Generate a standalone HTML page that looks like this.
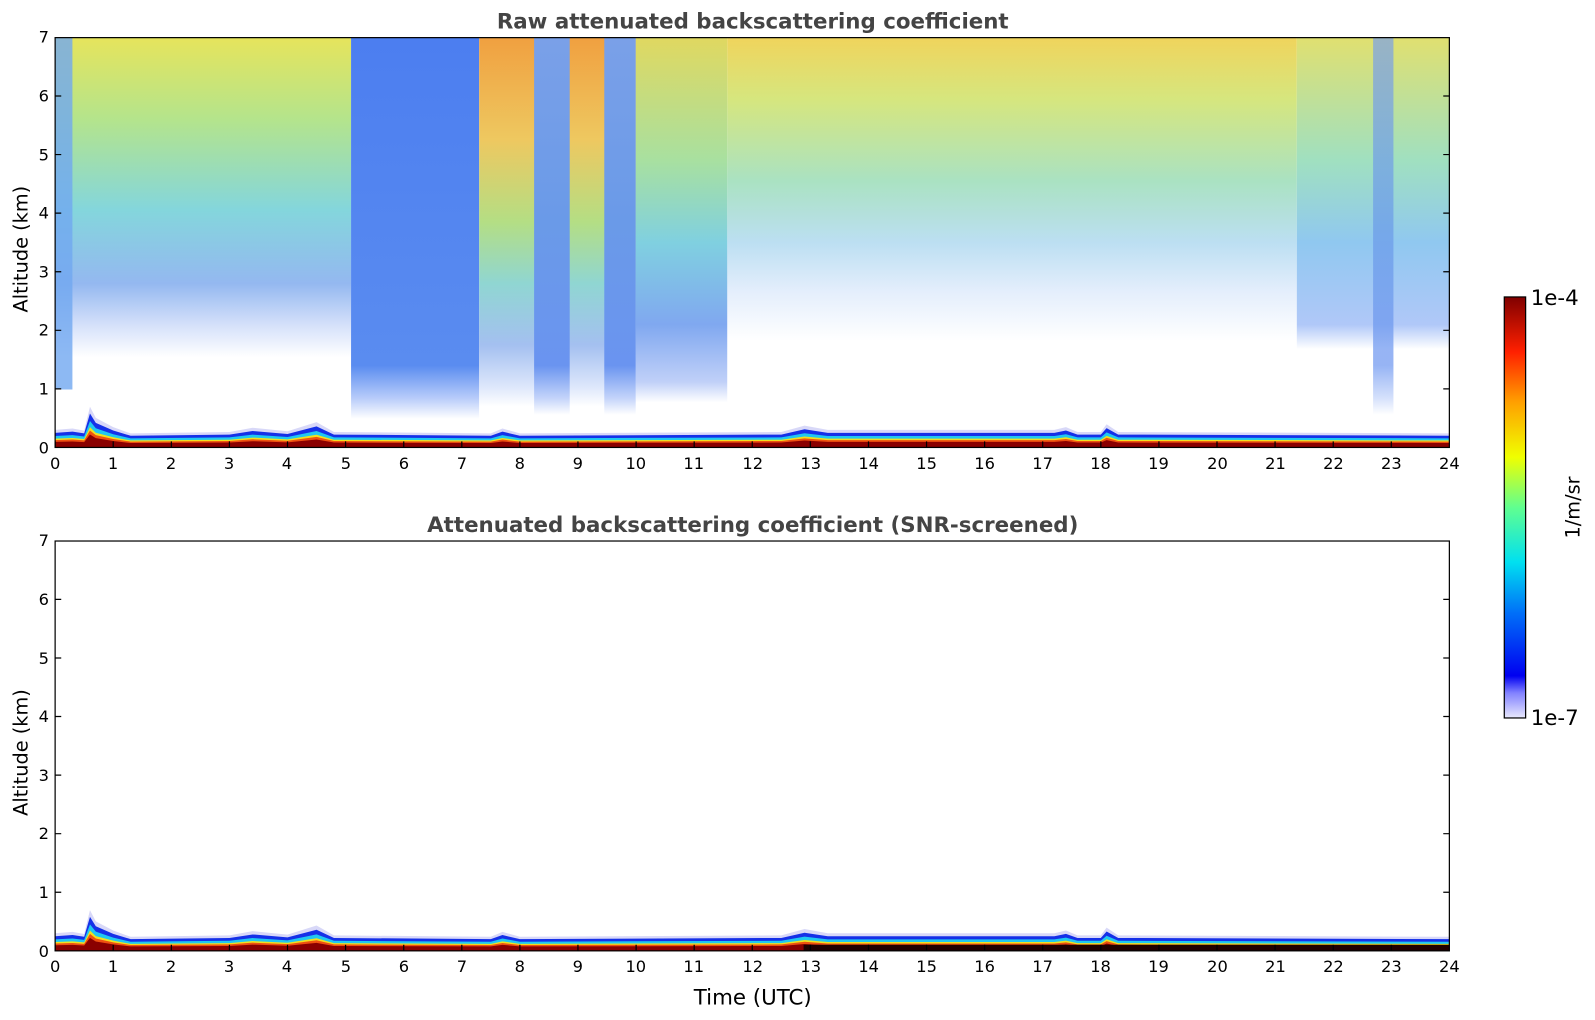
<!DOCTYPE html>
<html><head><meta charset="utf-8"><style>
html,body{margin:0;padding:0;background:#fff;}
svg{display:block;}
text{font-family:"DejaVu Sans","Liberation Sans",sans-serif;}
</style></head><body>
<svg width="1595" height="1020" viewBox="0 0 1568 1003" xmlns="http://www.w3.org/2000/svg">
<defs>
<linearGradient id="gA" x1="0" y1="0" x2="0" y2="1">
<stop offset="0" stop-color="#e6e45c"/><stop offset="0.2" stop-color="#b4e48c"/><stop offset="0.42" stop-color="#84d6dc"/><stop offset="0.6" stop-color="#94b8f0"/><stop offset="0.7" stop-color="#d4e0fa"/><stop offset="0.78" stop-color="#fff"/><stop offset="1" stop-color="#fff"/></linearGradient>
<linearGradient id="gB" x1="0" y1="0" x2="0" y2="1">
<stop offset="0" stop-color="#4c7ef0"/><stop offset="0.8" stop-color="#5a8cf0"/><stop offset="0.88" stop-color="#b8ccfa"/><stop offset="0.93" stop-color="#fff"/><stop offset="1" stop-color="#fff"/></linearGradient>
<linearGradient id="gC" x1="0" y1="0" x2="0" y2="1">
<stop offset="0" stop-color="#f0a040"/><stop offset="0.25" stop-color="#eec860"/><stop offset="0.45" stop-color="#b4de84"/><stop offset="0.6" stop-color="#90d6d2"/><stop offset="0.75" stop-color="#a4c0f0"/><stop offset="0.85" stop-color="#dce6fb"/><stop offset="0.9" stop-color="#fff"/><stop offset="1" stop-color="#fff"/></linearGradient>
<linearGradient id="gBl" x1="0" y1="0" x2="0" y2="1">
<stop offset="0" stop-color="#7aa0e8"/><stop offset="0.45" stop-color="#6a9ae8"/><stop offset="0.8" stop-color="#6a94f0"/><stop offset="0.88" stop-color="#c4d4fa"/><stop offset="0.92" stop-color="#fff"/><stop offset="1" stop-color="#fff"/></linearGradient>
<linearGradient id="gD" x1="0" y1="0" x2="0" y2="1">
<stop offset="0" stop-color="#e0d860"/><stop offset="0.3" stop-color="#a8e0a0"/><stop offset="0.5" stop-color="#80d0e0"/><stop offset="0.7" stop-color="#80a8f0"/><stop offset="0.84" stop-color="#c0d0f8"/><stop offset="0.89" stop-color="#fff"/><stop offset="1" stop-color="#fff"/></linearGradient>
<linearGradient id="gE" x1="0" y1="0" x2="0" y2="1">
<stop offset="0" stop-color="#f0d45c"/><stop offset="0.15" stop-color="#d6e67e"/><stop offset="0.35" stop-color="#aae2c2"/><stop offset="0.5" stop-color="#bcdff2"/><stop offset="0.62" stop-color="#e4eefc"/><stop offset="0.74" stop-color="#fff"/><stop offset="1" stop-color="#fff"/></linearGradient>
<linearGradient id="gG" x1="0" y1="0" x2="0" y2="1">
<stop offset="0" stop-color="#e0e070"/><stop offset="0.3" stop-color="#a0e0c0"/><stop offset="0.5" stop-color="#90c8f0"/><stop offset="0.7" stop-color="#b0c8f8"/><stop offset="0.76" stop-color="#fff"/><stop offset="1" stop-color="#fff"/></linearGradient>
<linearGradient id="gCB" x1="0" y1="1" x2="0" y2="0">
<stop offset="0" stop-color="#e8e8fc"/><stop offset="0.06" stop-color="#8080ff"/><stop offset="0.1" stop-color="#0000f0"/><stop offset="0.25" stop-color="#0070f8"/><stop offset="0.37" stop-color="#00e0f0"/><stop offset="0.5" stop-color="#60ff90"/><stop offset="0.62" stop-color="#f0ff00"/><stop offset="0.75" stop-color="#ffa000"/><stop offset="0.87" stop-color="#ff2000"/><stop offset="1" stop-color="#800000"/></linearGradient>
<path id="bl" d="M0,0 L0,0.25 L0.3,0.27 L0.5,0.24 L0.6,0.58 L0.7,0.42 L1,0.29 L1.3,0.2 L3,0.22 L3.4,0.28 L4,0.23 L4.5,0.36 L4.8,0.22 L7.5,0.2 L7.7,0.27 L8,0.2 L12.5,0.22 L12.9,0.31 L13.3,0.25 L17.2,0.25 L17.4,0.29 L17.6,0.22 L18,0.22 L18.1,0.33 L18.3,0.22 L24,0.2 L24,0 Z"/>
</defs>

<!-- TOP PLOT -->
<text x="740" y="28" text-anchor="middle" font-size="21" font-weight="bold" fill="#444">Raw attenuated backscattering coefficient</text>
<rect x="54" y="37" width="291" height="403" fill="url(#gA)"/>
<rect x="54" y="37" width="17" height="346" fill="#70a8f0" opacity="0.8"/>
<rect x="345" y="37" width="126" height="403" fill="url(#gB)"/>
<rect x="471" y="37" width="154" height="403" fill="url(#gC)"/>
<rect x="525" y="37" width="35" height="403" fill="url(#gBl)"/>
<rect x="594" y="37" width="31" height="403" fill="url(#gBl)"/>
<rect x="625" y="37" width="90" height="403" fill="url(#gD)"/>
<rect x="715" y="37" width="560" height="403" fill="url(#gE)"/>
<rect x="1275" y="37" width="150" height="403" fill="url(#gG)"/>
<rect x="1350" y="37" width="20" height="403" fill="url(#gBl)" opacity="0.7"/>
<g transform="translate(54,440) scale(57.125,-57.6)">
<use href="#bl" transform="scale(1,1.2)" fill="#d8d8f8"/>
<use href="#bl" fill="#1530e8"/>
<use href="#bl" transform="scale(1,0.78)" fill="#20c8f0"/>
<use href="#bl" transform="scale(1,0.6)" fill="#f0e020"/>
<use href="#bl" transform="scale(1,0.5)" fill="#f05010"/>
<use href="#bl" transform="scale(1,0.38)" fill="#8a0000"/>
</g>
<rect x="54" y="37" width="1371" height="403" fill="none" stroke="#000" stroke-width="1.2"/>

<!-- BOTTOM PLOT -->
<text x="740" y="523" text-anchor="middle" font-size="21" font-weight="bold" fill="#444">Attenuated backscattering coefficient (SNR-screened)</text>
<g transform="translate(54,935) scale(57.125,-57.6)">
<use href="#bl" transform="scale(1,1.2)" fill="#d8d8f8"/>
<use href="#bl" fill="#1530e8"/>
<use href="#bl" transform="scale(1,0.78)" fill="#20c8f0"/>
<use href="#bl" transform="scale(1,0.6)" fill="#f0e020"/>
<use href="#bl" transform="scale(1,0.5)" fill="#f05010"/>
<use href="#bl" transform="scale(1,0.38)" fill="#8a0000"/>
</g>
<rect x="790" y="929" width="635" height="6" fill="#200000"/>
<rect x="54" y="532" width="1371" height="403" fill="none" stroke="#000" stroke-width="1.2"/>

<!-- ticks -->
<g stroke="#000" stroke-width="1.2">
<path d="M54,440v-6M111.1,440v-6M168.3,440v-6M225.4,440v-6M282.5,440v-6M339.6,440v-6M396.8,440v-6M453.9,440v-6M511,440v-6M568.1,440v-6M625.3,440v-6M682.4,440v-6M739.5,440v-6M796.6,440v-6M853.8,440v-6M910.9,440v-6M968,440v-6M1025.1,440v-6M1082.3,440v-6M1139.4,440v-6M1196.5,440v-6M1253.6,440v-6M1310.8,440v-6M1367.9,440v-6"/>
<path d="M54,935v-6M111.1,935v-6M168.3,935v-6M225.4,935v-6M282.5,935v-6M339.6,935v-6M396.8,935v-6M453.9,935v-6M511,935v-6M568.1,935v-6M625.3,935v-6M682.4,935v-6M739.5,935v-6M796.6,935v-6M853.8,935v-6M910.9,935v-6M968,935v-6M1025.1,935v-6M1082.3,935v-6M1139.4,935v-6M1196.5,935v-6M1253.6,935v-6M1310.8,935v-6M1367.9,935v-6"/>
<path d="M54,382.4h6M54,324.8h6M54,267.2h6M54,209.6h6M54,152h6M54,94.4h6M1425,382.4h-6M1425,324.8h-6M1425,267.2h-6M1425,209.6h-6M1425,152h-6M1425,94.4h-6"/>
<path d="M54,877.4h6M54,819.8h6M54,762.2h6M54,704.6h6M54,647h6M54,589.4h6M1425,877.4h-6M1425,819.8h-6M1425,762.2h-6M1425,704.6h-6M1425,647h-6M1425,589.4h-6"/>
</g>
<g font-size="16" fill="#000" text-anchor="middle">
<g>
<text x="54" y="461">0</text><text x="111" y="461">1</text><text x="168" y="461">2</text><text x="225" y="461">3</text><text x="282" y="461">4</text><text x="340" y="461">5</text><text x="397" y="461">6</text><text x="454" y="461">7</text><text x="511" y="461">8</text><text x="568" y="461">9</text><text x="625" y="461">10</text><text x="682" y="461">11</text><text x="740" y="461">12</text><text x="797" y="461">13</text><text x="854" y="461">14</text><text x="911" y="461">15</text><text x="968" y="461">16</text><text x="1025" y="461">17</text><text x="1082" y="461">18</text><text x="1139" y="461">19</text><text x="1197" y="461">20</text><text x="1254" y="461">21</text><text x="1311" y="461">22</text><text x="1368" y="461">23</text><text x="1425" y="461">24</text>
</g>
<g transform="translate(0,495)">
<text x="54" y="461">0</text><text x="111" y="461">1</text><text x="168" y="461">2</text><text x="225" y="461">3</text><text x="282" y="461">4</text><text x="340" y="461">5</text><text x="397" y="461">6</text><text x="454" y="461">7</text><text x="511" y="461">8</text><text x="568" y="461">9</text><text x="625" y="461">10</text><text x="682" y="461">11</text><text x="740" y="461">12</text><text x="797" y="461">13</text><text x="854" y="461">14</text><text x="911" y="461">15</text><text x="968" y="461">16</text><text x="1025" y="461">17</text><text x="1082" y="461">18</text><text x="1139" y="461">19</text><text x="1197" y="461">20</text><text x="1254" y="461">21</text><text x="1311" y="461">22</text><text x="1368" y="461">23</text><text x="1425" y="461">24</text>
</g>
</g>
<g font-size="16" fill="#000" text-anchor="end">
<text x="48" y="446">0</text><text x="48" y="388">1</text><text x="48" y="330">2</text><text x="48" y="273">3</text><text x="48" y="215">4</text><text x="48" y="158">5</text><text x="48" y="100">6</text><text x="48" y="42">7</text>
<text x="48" y="941">0</text><text x="48" y="883">1</text><text x="48" y="825">2</text><text x="48" y="768">3</text><text x="48" y="710">4</text><text x="48" y="653">5</text><text x="48" y="595">6</text><text x="48" y="537">7</text>
</g>
<text transform="translate(27,245) rotate(-90)" text-anchor="middle" font-size="19">Altitude (km)</text>
<text transform="translate(27,740) rotate(-90)" text-anchor="middle" font-size="19">Altitude (km)</text>
<text x="740" y="988" text-anchor="middle" font-size="21">Time (UTC)</text>

<!-- colorbar -->
<rect x="1479" y="292" width="21" height="414" fill="url(#gCB)" stroke="#000" stroke-width="1.2"/>
<text x="1505" y="300" font-size="21">1e-4</text>
<text x="1505" y="713" font-size="21">1e-7</text>
<text transform="translate(1553,499) rotate(-90)" text-anchor="middle" font-size="19">1/m/sr</text>
</svg>
</body></html>
